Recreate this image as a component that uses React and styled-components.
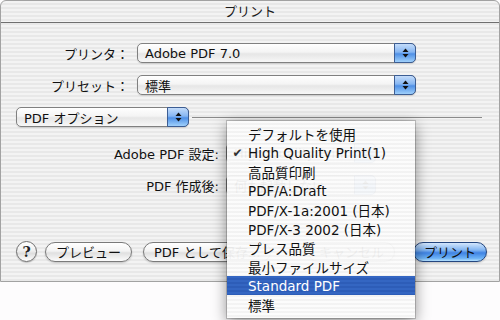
import styled, { createGlobalStyle } from "styled-components";

const GlobalStyle = createGlobalStyle`
  html, body {
    margin: 0;
    background: #fdfcfd;
  }
  body {
    font-family: "DejaVu Sans", "Noto Sans CJK JP", sans-serif;
    font-size: 13px;
    color: #111;
  }
`;

const stripes = "repeating-linear-gradient(to bottom, #f3f3f3 0px, #f3f3f3 2px, #e8e8e8 2px, #e8e8e8 4px)";

function ArrowsIcon() {
  return (
    <svg width="7" height="10" viewBox="0 0 7 10">
      <path d="M3.5 0.5 L6.5 4 L0.5 4 Z" fill="#111" />
      <path d="M0.5 6 L6.5 6 L3.5 9.5 Z" fill="#111" />
    </svg>
  );
}

function PopUp({ width, children }) {
  return (
    <PopUpBox $width={width}>
      <PopUpText>{children}</PopUpText>
      <PopUpArrow>
        <ArrowsIcon />
      </PopUpArrow>
    </PopUpBox>
  );
}

const presets = [
  "デフォルトを使用",
  "High Quality Print(1)",
  "高品質印刷",
  "PDF/A:Draft",
  "PDF/X-1a:2001 (日本)",
  "PDF/X-3 2002 (日本)",
  "プレス品質",
  "最小ファイルサイズ",
  "Standard PDF",
  "標準",
];

export default function App() {
  return (
    <Page>
      <GlobalStyle />
      <Window>
        <TitleBar>プリント</TitleBar>
        <Content>
          <FieldGrid>
            <Label>プリンタ：</Label>
            <PopUp width={279}>Adobe PDF 7.0</PopUp>
            <Label>プリセット：</Label>
            <PopUp width={279}>標準</PopUp>
          </FieldGrid>

          <OptionRow>
            <PopUp width={173}>PDF オプション</PopUp>
            <Separator />
          </OptionRow>

          <SettingsGrid>
            <Label>Adobe PDF 設定:</Label>
            <PopUp width={150}>High Quality Print(1)</PopUp>
            <Label>PDF 作成後:</Label>
            <PopUp width={150}>何も起動しない</PopUp>
          </SettingsGrid>

          <ButtonRow>
            <HelpButton>?</HelpButton>
            <PillButton>プレビュー</PillButton>
            <PillButton $gap={11}>PDF として保存...</PillButton>
            <Spacer />
            <PillButton>キャンセル</PillButton>
            <PillButton $gap={18} $primary>プリント</PillButton>
          </ButtonRow>
        </Content>

        <Menu>
          {presets.map((name) => (
            <MenuItem key={name} $selected={name === "Standard PDF"}>
              <Check>{name === "High Quality Print(1)" ? "✔" : ""}</Check>
              <span>{name}</span>
            </MenuItem>
          ))}
        </Menu>
      </Window>
    </Page>
  );
}

const Page = styled.div`
  width: 500px;
  height: 320px;
  overflow: hidden;
`;

const Window = styled.div`
  position: relative;
  width: 500px;
  height: 282px;
  box-sizing: border-box;
  display: flex;
  flex-direction: column;
  border: 1px solid #a2a2a2;
  border-radius: 6px 6px 0 0;
  background: ${stripes};
`;

const TitleBar = styled.div`
  height: 22px;
  box-sizing: border-box;
  border-bottom: 1px solid #6f6f6f;
  text-align: center;
  line-height: 21px;
  font-size: 13px;
  color: #1a1a1a;
`;

const Content = styled.div`
  flex: 1;
  display: flex;
  flex-direction: column;
  padding: 20px 12px 19px 15px;
`;

const FieldGrid = styled.div`
  display: grid;
  grid-template-columns: 113px 279px;
  column-gap: 8px;
  row-gap: 12px;
  align-items: center;
`;

const SettingsGrid = styled.div`
  display: grid;
  grid-template-columns: 203px 150px;
  column-gap: 7px;
  row-gap: 12px;
  align-items: center;
  margin-top: 16px;
`;

const Label = styled.div`
  text-align: right;
  white-space: nowrap;
`;

const PopUpBox = styled.div`
  width: ${(p) => p.$width}px;
  height: 20px;
  box-sizing: border-box;
  display: flex;
  align-items: center;
  border: 1px solid #808080;
  border-radius: 5px;
  background: linear-gradient(to bottom, #ffffff 0%, #f4f4f4 45%, #e6e6e6 55%, #f7f7f7 100%);
  box-shadow: 0 1px 1px rgba(0, 0, 0, 0.12);
`;

const PopUpText = styled.div`
  flex: 1;
  padding-left: 7px;
  white-space: nowrap;
  overflow: hidden;
`;

const PopUpArrow = styled.div`
  align-self: stretch;
  width: 20px;
  margin: -1px -1px -1px 0;
  display: flex;
  align-items: center;
  justify-content: center;
  border: 1px solid #3c5d93;
  border-radius: 0 5px 5px 0;
  background: linear-gradient(to bottom, #c4dcfa 0%, #86b6f2 45%, #4f90e6 55%, #9fd0fb 100%);
`;

const OptionRow = styled.div`
  display: flex;
  align-items: center;
  margin-top: 12px;
`;

const Separator = styled.div`
  flex: 1;
  height: 1px;
  margin: 0 5px 0 3px;
  background: #8a8a8a;
`;

const ButtonRow = styled.div`
  margin-top: auto;
  display: flex;
  align-items: center;
`;

const Spacer = styled.div`
  flex: 1;
`;

const HelpButton = styled.div`
  width: 21px;
  height: 21px;
  box-sizing: border-box;
  margin-right: 8px;
  border: 1px solid #6e6e6e;
  border-radius: 50%;
  display: flex;
  align-items: center;
  justify-content: center;
  font-family: "DejaVu Serif", serif;
  font-weight: bold;
  font-size: 14px;
  color: #222;
  background: linear-gradient(to bottom, #ffffff 0%, #f0f0f0 45%, #dedede 60%, #ffffff 100%);
  box-shadow: 0 1px 1px rgba(0, 0, 0, 0.2);
`;

const PillButton = styled.div`
  height: 20px;
  box-sizing: border-box;
  margin-left: ${(p) => p.$gap || 0}px;
  padding: 0 10px;
  display: flex;
  align-items: center;
  white-space: nowrap;
  border-radius: 10px;
  border: 1px solid ${(p) => (p.$primary ? "#24467f" : "#7a7a7a")};
  background: ${(p) =>
    p.$primary
      ? "linear-gradient(to bottom, #d3e6fc 0%, #7fb3f1 40%, #3f83e3 55%, #6db3f6 85%, #b6e0fd 100%)"
      : "linear-gradient(to bottom, #ffffff 0%, #f3f3f3 45%, #e0e0e0 55%, #fbfbfb 100%)"};
  box-shadow: 0 1px 2px rgba(0, 0, 0, 0.2);
`;

const Menu = styled.div`
  position: absolute;
  left: 226px;
  top: 120px;
  width: 188px;
  padding: 3px 0 4px;
  z-index: 2;
  background: repeating-linear-gradient(
    to bottom,
    rgba(252, 252, 252, 0.95) 0px,
    rgba(252, 252, 252, 0.95) 2px,
    rgba(243, 243, 243, 0.95) 2px,
    rgba(243, 243, 243, 0.95) 4px
  );
  box-shadow: 0 0 0 1px rgba(0, 0, 0, 0.18), 0 4px 14px rgba(0, 0, 0, 0.45);
`;

const MenuItem = styled.div`
  height: 19px;
  display: grid;
  grid-template-columns: 21px 1fr;
  align-items: center;
  font-size: 13.5px;
  white-space: nowrap;
  color: ${(p) => (p.$selected ? "#fff" : "#111")};
  background: ${(p) =>
    p.$selected
      ? "repeating-linear-gradient(to bottom, #3466c2 0px, #3466c2 2px, #2d5db8 2px, #2d5db8 4px)"
      : "transparent"};
`;

const Check = styled.span`
  text-align: center;
  font-size: 12px;
  color: #333;
`;
